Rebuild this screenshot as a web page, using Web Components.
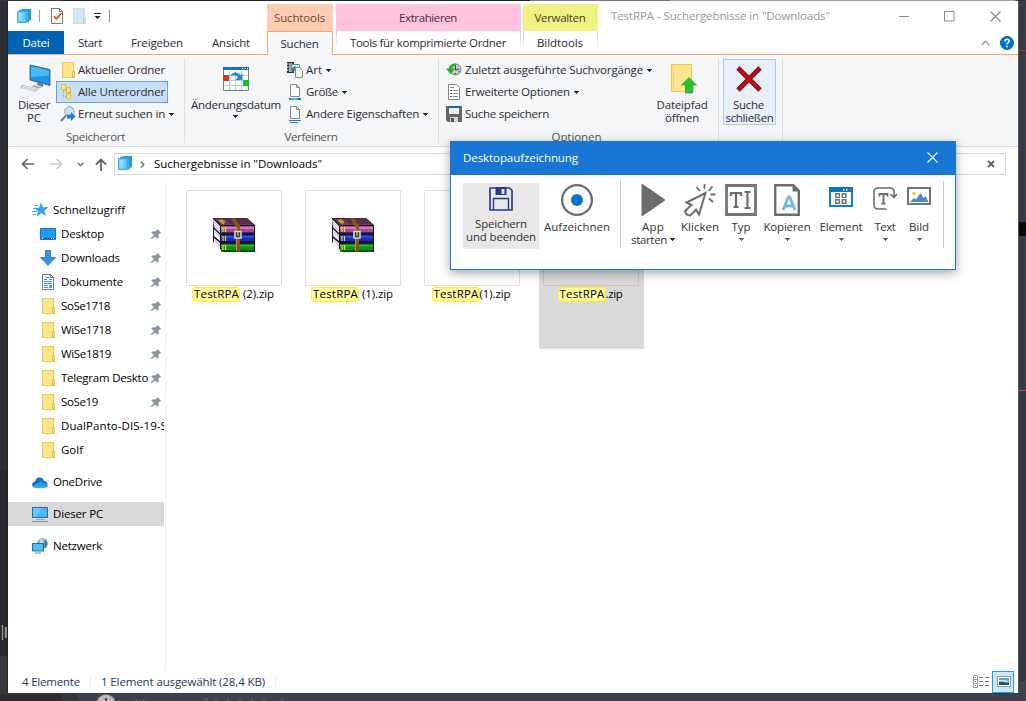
<!DOCTYPE html>
<html lang="de">
<head>
<meta charset="utf-8">
<title>Explorer</title>
<style>
html,body{margin:0;padding:0;width:1026px;height:701px;overflow:hidden}
body{font:11.5px/16px "Open Sans","Noto Sans",sans-serif;color:#000;background:#2d2f36}
</style>
</head>
<body>
<app-desktop></app-desktop>
<script>
const folder = `<path d="M1.5.5h11v15h-11z" fill="#ffe48e" stroke="#eec84f"/><path d="M11.500 9.500h2v6h-2z" fill="#ffe081" stroke="#e6b93a"/>`;
const cubes = `<path d="M5 0h9v11l-2 1H5z" fill="#2b9bdc"/><path d="M2.500 1h9v12h-9z" fill="#42b3ee" stroke="#1e8fd0" stroke-width=".7"/><path d="M.5 2.500h8.500v11H.5z" fill="#66caf8" stroke="#2d9ddb" stroke-width=".8"/><path d="M1.500 3.500h4v8h-4z" fill="#8ddcff"/>`;
const page = `<path d="M2.500.5h6l3 3v9h-9z" fill="#fafafa" stroke="#888"/><path d="M8.500.5v3h3" fill="none" stroke="#888"/>`;
// name: [width, height, markup]
const ICONS = {
 cubes: [14,14,cubes],
 folder: [15,16,folder],
 task: [12,16,`<path d="M.5.5h8l3 3v12H.5z" fill="#fdfdfd" stroke="#777"/><path d="M8.500.5v3h3" fill="none" stroke="#777"/><path d="M3 8.500l2.500 2.500 5-6" fill="none" stroke="#e8521c" stroke-width="1.800"/>`],
 pale: [13,16,`<path d="M.5.5h11v15H.5z" fill="#d8e4f6" stroke="#ccd9ee"/><path d="M10.500 9.500h2v6h-2z" fill="#d0ddf2" stroke="#bccbe4"/>`],
 caret: [5,3,`<path d="M0 0h5v1H4v1H3v1H2V2H1V1H0z" fill="currentColor"/>`],
 qcaret: [7,6,`<path d="M0 0h7v1H0zM.5 3h6l-3 3z" fill="#222"/>`],
 min: [11,11,`<path d="M0 5.500h10" stroke="#888"/>`],
 max: [11,11,`<path d="M.5.5h9.500v9.500H.5z" fill="none" stroke="#888"/>`],
 close: [11,11,`<path d="M.5.5l10 10M10.500.5l-10 10" stroke="currentColor" stroke-width="1.100"/>`],
 up6: [9,6,`<path d="M.7 5L4.500 1.200 8.300 5" fill="none" stroke="#999" stroke-width="1.400"/>`],
 help: [14,14,`<circle cx="7" cy="7" r="6.500" fill="#0078d7" stroke="#005a9e"/><path d="M4.900 5.500c0-3 4.400-2.700 4.200-.2C9 6.800 7 6.700 7 8.500M7 9.800v1.500" fill="none" stroke="#fff" stroke-width="1.500"/>`],
 pc: [32,28,`<path d="M10 0l20 4.500v16L10 15z" fill="#1795e8" stroke="#3d4a55" stroke-width=".8"/><path d="M11 1l18 4.500v5L11 12z" fill="#47b9fa"/><path d="M18 17.500l5 1.500v3l-6-2z" fill="#777"/><path d="M14 20l8 2.500-4 1-6-2z" fill="#aaa"/><path d="M2 19.500l17 4.500-4 3-15-4z" fill="#bfc4c8"/><path d="M3 21l13 3.500M1.500 22.500l13 3.500M7 20l-4 3M11 21.500l-4 3M15 22.500l-4 3" stroke="#f0f0f0" stroke-width=".7"/>`],
 tree: [16,16,`<path d="M3 5v8h4M3 6h5" fill="none" stroke="#999" stroke-dasharray="1 1"/><path d="M1.500.5h4v5h-4zM6.500 3.500h4v5h-4z" fill="#ffe48e" stroke="#e6b93a"/><path d="M6.500 9.500h4v5.500h-4z" fill="#ffe48e" stroke="#e6b93a"/>`],
 again: [16,16,`<circle cx="9.500" cy="5.500" r="4.800" fill="#c4e5fa" stroke="#8aa0b0"/><path d="M6 9.500L1 15" stroke="#6f7b85" stroke-width="2"/><path d="M7 8.500h4V6l4.500 4.500L11 15v-2.500H7z" fill="#1c7fd6"/>`],
 calendar: [26,24,`<path d="M.5.5h25v23H.5z" fill="#fff" stroke="#777"/><path d="M0 0h26v3H0z" fill="#1871c5"/><path d="M19 1h1v1h-1zM21.500 1h1v1h-1zM24 1h1v1h-1z" fill="#fff"/><path d="M1 8.500h24M1 13.500h24M1 18.500h24M6.500 4v19M12.500 4v19M18.500 4v19" stroke="#a8cfe6"/><path d="M0 8h6v6H0z" fill="#e03127"/><path d="M20 13h6v6h-6z" fill="#1dbb33"/><path d="M7 9.500c2-5 8-5 10.500-1.500l2-2v7h-7l2.500-2.500c-2-2.500-5-3-8-1z" fill="#2688da"/>`],
 art: [16,16,`<path d="M0 0h7v11H0z" fill="#333"/><path d="M2 1h3v9H2z" fill="#9ab"/><path d="M0 2h1.500M0 5h1.500M0 8h1.500" stroke="#fff"/><path d="M4.500 2.500h8v6h-8z" fill="#d7ecfb" stroke="#777"/><path d="M5 6l3-2 4 4H5z" fill="#278f87"/><path d="M8.500 5.500h4l3 3v7h-7z" fill="#fafafa" stroke="#888"/>`],
 size: [14,16,page+`<path d="M1 14h12v2H1z" fill="#1383cf"/><path d="M3 14.500h6v1H3z" fill="#8fe0ff"/>`],
 props: [14,17,page+`<path d="M1 14.500h12M2 16.500h8" stroke="#1779ca"/>`],
 recent: [16,14,`<circle cx="9.500" cy="6.500" r="5.500" fill="#c6cacc" stroke="#777"/><path d="M9.500 2v5l3.500-1M5.500 7h1M9.500 11v-1M12.500 8.500h1" fill="none" stroke="#444"/><path d="M9.500.6C5 .6 3.200 3 3 5.500H0L4.500 11 9 5.500H6C6.300 4 7.500 2.800 10 2.400z" fill="#1eb52e"/>`],
 options: [16,16,`<path d="M2.500.5h8l3 3v12h-11z" fill="#fff" stroke="#888"/><path d="M4 6h2v1H4zM4 9h2v1H4zM4 12h2v1H4z" fill="#555"/><path d="M7 6.500h5M7 9.500h5M7 12.500h5M4 3.500h4" stroke="#888"/>`],
 floppy: [16,16,`<path d="M0 0h16v16H2l-2-2z" fill="#666"/><path d="M3 0h10v2H3z" fill="#0f67b8"/><path d="M3 2h10v6H3z" fill="#efefef"/><path d="M4 11h8v5H4z" fill="#d6d6d6"/><path d="M5 12h3v4H5z" fill="#555"/>`],
 openpath: [27,30,`<path d="M.5.5h20v27H.5z" fill="#ffe38f" stroke="#efc74b"/><path d="M2.500 2v24" stroke="#f9d368"/><path d="M20.500 20h2v7.500h-2z" fill="#ffe38f" stroke="#efc74b"/><path d="M18 13.500l7.500 7.500h-4v8h-7v-8h-4z" fill="#23c335" stroke="#18a52a" stroke-width=".7"/>`],
 bigx: [26,26,`<path d="M2 2l22 22M24 2L2 24" stroke="#5d0a12" stroke-width="4.600"/><path d="M2.300 2.300l21.400 21.400M23.700 2.300L2.300 23.700" stroke="#c90913" stroke-width="2.900"/>`],
 back: [13,12,`<path d="M13 6H1.500M6.500 1l-5 5 5 5" fill="none" stroke="currentColor" stroke-width="1.700"/>`],
 upa: [12,13,`<path d="M6 13V1.500M1 6.500l5-5 5 5" fill="none" stroke="#666" stroke-width="1.800"/>`],
 chevd: [7,5,`<path d="M.7.7l2.800 3 2.800-3" fill="none" stroke="#777" stroke-width="1.600"/>`],
 chevr: [5,7,`<path d="M.8.5l3 3-3 3" fill="none" stroke="#777" stroke-width="1.500"/>`],
 boldx: [8,8,`<path d="M1 1l6 6M7 1L1 7" stroke="#666" stroke-width="2"/>`],
 star: [16,14,`<path d="M9 .5l1.800 4.200 4.700-.2-3.500 3 1.500 4.700-4.200-2.400-4 3 1.200-4.600L3 5.300l4.600-.3z" fill="#2ba3ee" stroke="#1684d0" stroke-width=".6"/><path d="M3 2.500h3M1 5.500h4M0 8.500h5M1 11.500h3" stroke="#3aa8ec" stroke-width="1"/>`],
 desktop: [16,12,`<path d="M.5.5h15v11H.5z" fill="#1d9bf3" stroke="#1478be"/><path d="M1 10.500h14" stroke="#0b65ab"/><path d="M2 10.500h1M11 10.500h1M13 10.500h1" stroke="#fff"/>`],
 down: [16,16,`<path d="M5.500.5h5v7h5L8 15.500.5 7.500h5z" fill="#3793e0" stroke="#2574c0" stroke-width=".8"/>`],
 doc: [16,16,`<path d="M2.500.5h8l3 3v12h-11z" fill="#fff" stroke="#777"/><path d="M10.500.5v3h3" fill="none" stroke="#777"/><path d="M6 3.500h3M4 5.500h3M9 5.500h3M4 7.500h8M4 9.500h8M4 11.500h4M4 13.500h4" stroke="#3a92d0"/><path d="M9 11h3v3H9z" fill="#6aa07b"/>`],
 pin: [10,10,`<path d="M6.300 0L10 3.700l-1.200.6-1.500 1.500.2 2.700-1.200 1L4 7.200.7 10 0 9.300 2.900 6 .5 3.700l1-1.200 2.800.2 1.500-1.500z" fill="#8a969f" stroke="#8a969f" stroke-width=".4"/>`],
 cloud: [16,11,`<path d="M3.500 10.500C-1 10.500-.6 5 3 4.500 4-.5 10.500-.8 12 4c4 .3 5 6 1 6.500z" fill="#0f6cc4"/><path d="M3 10.500c-1.500 0-2-1.500-1-2.500L9 4.500l5.500 2.500c2 1.500 1 3.500-1 3.500z" fill="#28a0ea"/>`],
 thispc: [16,15,`<path d="M.5.5h15v10H.5z" fill="#45b8fb" stroke="#38698a"/><path d="M1 1h9L4 10H1z" fill="#7bd0ff" opacity=".6"/><path d="M4 12h8v1H4z" fill="#9aa"/><path d="M0 14h16v1H0z" fill="#78909c"/>`],
 net: [16,16,`<circle cx="10.500" cy="5.500" r="5.200" fill="#5f9db4"/><path d="M7 3c2-3 5-2 5 0s-3 2-3 4z" fill="#b7dceb"/><path d="M13 2c3 2 3 6 0 8z" fill="#36768e"/><path d="M.5 5.500h11v7.500H.5z" fill="#4dbdf9" stroke="#2d6f9a"/><path d="M3 15h6" stroke="#788" stroke-width="1"/>`],
 rar: [42,34,`
  <path d="M0 0h34l8 7v27H10L0 24z" fill="#23151f"/>
  <path d="M0 1l7 7v7L1 9zM1 11l6 6v6l-6-5zM1 20l6 5v8l-6-7z" fill="#eef0fb"/>
  <path d="M1 4l6 6M1 7l6 6M2 14l5 5M2 22l5 6" stroke="#9a9ec4" stroke-width=".7"/>
  <path d="M1 .5h33l7 6.500H8z" fill="#713659"/><path d="M12 .5h22l6 5.500H17z" fill="#553046"/>
  <path d="M8 8h33v6H8z" fill="#a04c92"/><path d="M8 9h33v2H8z" fill="#cf7ac1"/><path d="M8 14h33v1H8z" fill="#54254d"/>
  <path d="M8 17h33v6H8z" fill="#1230c0"/><path d="M8 18h33v1.500H8z" fill="#2b50f5"/><path d="M8 23h33v1H8z" fill="#07135f"/>
  <path d="M8 26h33v6H8z" fill="#0f8f17"/><path d="M8 27h33v1.500H8z" fill="#20bd2a"/><path d="M8 32h33v1.500H8z" fill="#075e0c"/>
  <path d="M10 9v5M12.500 9v5M10 18v5M12.500 18v5M10 27v5M12.500 27v5" stroke="#e8db26" stroke-width="1.200"/>
  <path d="M6 2l5 4M8 1.500l4 3" stroke="#cbbb24" stroke-width="1.400"/>
  <path d="M18 .5h4l5 7v26h-4V9z" fill="#8b5220"/><path d="M23.500 9v24" stroke="#c68a43"/>
  <path d="M22 13.500h6v6.500h-6z" fill="#333" stroke="#d5d5d5" stroke-width="1.600"/><path d="M25 14v4" stroke="#eee"/>`],
 list: [16,13,`<path d="M.5.5h4v12h-4zM.5 4.500h4M.5 8.500h4" fill="#fff" stroke="#999"/><path d="M2 2h1v1H2z" fill="#555"/><path d="M2 6h1v1H2z" fill="#2277d0"/><path d="M2 10h1v1H2z" fill="#c22"/><path d="M6 2.500h4M12 2.500h4M6 6.500h4M12 6.500h4M6 10.500h4M12 10.500h4" stroke="#777"/>`],
 thumbs: [14,12,`<path d="M.5.500h13v10h-13z" fill="#fff" stroke="#999"/><path d="M2 2h10v7H2z" fill="#5d9fe0"/><path d="M2 4h7l3 2H2z" fill="#bfe0f5"/><path d="M2 6c4-1 7 1 10 1v2H2z" fill="#1d5a4c"/>`],
 save: [24,24,`<path d="M1 1h19.500L23 3.500V23H1z" fill="none" stroke="#2a3990" stroke-width="1.700" stroke-linejoin="round"/><path d="M6.500 0v8h11V0" fill="#2a3990"/><path d="M12.500 2h3v5h-3z" fill="#e6e6e6"/><path d="M4.500 23V11.500h15V23" fill="none" stroke="#2a3990" stroke-width="1.400"/>`],
 record: [32,32,`<circle cx="16" cy="16" r="14.900" fill="#fff" stroke="#6a6a6c" stroke-width="2.200"/><circle cx="16" cy="16" r="6" fill="#0a74c4"/>`],
 play: [24,32,`<path d="M1.500 1l21.500 15L1.500 31z" fill="#6c6d6f" stroke="#6c6d6f" stroke-width="2" stroke-linejoin="round"/>`],
 click: [32,32,`<path d="M21.500 9L2.500 18.500l5 2.500-6.500 6 1.500 3.500 3.500 1.200 6-6 3 4.800z" fill="none" stroke="#6c6d6f" stroke-width="2"/><path d="M20.500 0v5M12.500 3l3.500 4M28.500 2.500l-4 4.500M26.500 10.500h5M25 14.500l4 3.500" stroke="#6c6d6f" stroke-width="1.800"/>`],
 typ: [32,32,`<path d="M1.500 1.500h29v29h-29z" fill="#fff" stroke="#737477" stroke-width="2.800"/><path d="M6 12V9h10v3M11 9v14M8.500 23h5M19.500 8h6M19.500 24h6M22.500 8v16" fill="none" stroke="#6c6d6f" stroke-width="2.200"/>`],
 copy: [26,32,`<path d="M1.200 1.200h18l5.600 5.600v24H1.200z" fill="#fff" stroke="#6c6d6f" stroke-width="2.400"/><path d="M18.500 1v6.500h7z" fill="#6c6d6f"/><path d="M9 26l5.500-13h1.200L21 26M11 22h8" fill="none" stroke="#6db9e4" stroke-width="2.800"/>`],
 element: [24,20,`<path d="M1 1h22v18H1z" fill="#fff" stroke="#0e82c6" stroke-width="2"/><path d="M0 0h24v5H0z" fill="#0878bd"/><path d="M14 2h1.500v1.500H14zM17 2h1.500v1.500H17z" fill="#fff"/><path d="M20.500 2H22v1.500h-1.500z" fill="#e44"/><path d="M6.800 6.800h3.600v3.600H6.800zM13.300 6.800h3.600v3.600h-3.600zM6.800 12.700h3.600v3.600H6.800zM13.300 12.700h3.600v3.600h-3.600z" fill="none" stroke="#707173" stroke-width="1.400"/>`],
 text: [24,24,`<path d="M13.500 22H5c-2.500 0-4-1.500-4-4V5c0-2.500 1.500-4 4-4h12c2.500 0 4 1.500 4 4v4M17.500 7l3.500 3.500L24 7" fill="none" stroke="#6c6d6f" stroke-width="1.600"/><path d="M6.500 9.500V7h8v2.500M10.500 7v9.500M8.500 16.500h4" fill="none" stroke="#6c6d6f" stroke-width="1.800"/>`],
 image: [24,18,`<path d="M1 1h22v16H1z" fill="#fff" stroke="#737477" stroke-width="2"/><circle cx="7" cy="6.500" r="2" fill="#f5cf5c"/><path d="M3 15l4-4 2 1.500L13.500 6l3 5 2-2 3 6z" fill="#4f86c9"/>`]
};

// registers an element whose shadow root is cloned from a template
function define(tag, css, html, setup) {
  const t = document.createElement('template');
  t.innerHTML = '<style>' + css + '</style>' + html;
  customElements.define(tag, class extends HTMLElement {
    constructor() { super(); this.attachShadow({mode:'open'}).append(t.content.cloneNode(true)); }
    connectedCallback() { if (setup) setup(this, this.shadowRoot); }
  });
}
const carets = `<ui-icon name="caret"></ui-icon>`;

define('ui-icon', `:host{display:block;flex:none}svg{display:block;overflow:visible}`, `<svg></svg>`, (el, r) => {
  const [w,h,m] = ICONS[el.getAttribute('name')], s = r.querySelector('svg');
  s.setAttribute('width', w); s.setAttribute('height', h); s.setAttribute('viewBox', `0 0 ${w} ${h}`);
  s.innerHTML = m;
});
// a one-line label that tracks its letters to a given width
define('ui-label', `:host{display:block;flex:none;white-space:nowrap;line-height:16px}span{display:inline-block}`, `<span><slot></slot></span>`, (el, r) => {
  const w = +el.getAttribute('w');
  if (!w) return;
  const s = r.querySelector('span'), n = el.textContent.length;
  s.style.letterSpacing = ((w - s.getBoundingClientRect().width) / n).toFixed(3) + 'px';
  el.style.width = w + 'px';
});

define('app-desktop', `
:host{display:grid;grid-template:1px 692px 8px/8px 1010px 8px;width:1026px;height:701px;position:relative;background:#2b2c32}
.top{grid-column:1/-1;background:linear-gradient(90deg,#35353c 62px,#222127 62px 530px,#77777b 530px 670px,#9b9aa0 670px 830px,#9b9aa0 830px 1014px,#33353c 1018px)}
.l{background:linear-gradient(#2d2f36 0 469px,#292a30 469px 655px,#34373d 655px 660px,#34373d);display:flex;flex-direction:column;justify-content:flex-end;border-right:1px solid #242529;box-sizing:border-box}
.l svg{margin-bottom:52px}
.r{background:linear-gradient(#383b43 49px,#a33038 49px 50px,#383b43 50px 221px,#08080a 221px 235px,#383b43 235px 389px,#d8433f 389px 390px,#33363e 390px 680px,#40434d 680px);border-left:1px solid #55565b;box-sizing:border-box}
.b{grid-column:1/-1;background:linear-gradient(#3a3b40 1px,transparent 1px),linear-gradient(90deg,#2b2c31 62px,#34363d 62px 78px,#3e414b 78px)}
.b svg{display:block}
`, `<div class="top"></div><div class="l"><svg width="7" height="16"><path d="M2.500 0v15M5.500 2v11M7 2v11" stroke="#999" stroke-width="1.300"/></svg></div>
<explorer-window></explorer-window><div class="r"></div>
<div class="b"><svg width="1026" height="8"><circle cx="106" cy="11" r="9.500" fill="#b9babd"/><path d="M105 5h2v3h-2z" fill="#44464e"/><path d="M136 6v2M140 7v1M144 6v2M204 6h4M216 5v3M228 5v3M240 5v3M252 5v3M264 5v3M282 5v3" stroke="#747780" fill="none"/></svg></div>
<recorder-dialog></recorder-dialog>`);

define('explorer-window', `:host{display:flex;flex-direction:column;background:#fff;overflow:hidden}
.body{display:flex;flex:1;min-height:0}`,
`<window-head></window-head><ribbon-bar></ribbon-bar><address-bar></address-bar><div class="body"><nav-pane></nav-pane><file-grid></file-grid></div><status-bar></status-bar>`);

define('window-head', `
:host{display:flex;height:53px;border-bottom:1px solid #ffa475;flex:none}
.left{width:259px}.quick{height:30px;display:flex;align-items:center;padding-left:9px;box-sizing:border-box}
.sep{width:1px;height:12px;background:#999}
.tabs{display:flex;height:24px;align-items:center;color:#2a2a35;margin-bottom:-1px}
.file{background:#0063b1;color:#fff;width:56px;height:23px;display:flex;align-items:center;justify-content:center;margin:0 14px 1px 0;padding-top:1px;box-sizing:border-box}
.right{flex:1;display:flex;flex-direction:column}
.title{height:30px;display:flex;align-items:center;color:#999;padding:0 18px 0 13px}
.title ui-label{margin-right:auto}.tools{display:flex;height:23px;align-items:center;justify-content:flex-end;gap:10px;padding-right:4px}`,
`<div class="left"><div class="quick"><ui-icon name="cubes"></ui-icon><i class="sep" style="margin:0 11px 0 8px"></i><ui-icon name="task"></ui-icon><ui-icon name="pale" style="margin:0 8px 0 10px"></ui-icon><ui-icon name="qcaret"></ui-icon><i class="sep" style="margin-left:8px"></i></div>
<div class="tabs"><span class="file"><ui-label w="27">Datei</ui-label></span><ui-label w="24">Start</ui-label><ui-label w="52" style="margin:0 29px">Freigeben</ui-label><ui-label w="38">Ansicht</ui-label></div></div>
<context-tab active style="--c:#ffcdb4;--t:#6f4630;width:66px;margin-right:3px"><ui-label slot="head" w="51">Suchtools</ui-label><ui-label w="38">Suchen</ui-label></context-tab>
<context-tab style="--c:#ffc3de;--t:#4c2b3a;width:185px;margin-right:2px"><ui-label slot="head" w="58">Extrahieren</ui-label><ui-label w="156">Tools für komprimierte Ordner</ui-label></context-tab>
<context-tab style="--c:#f0f083;--t:#44441f;width:75px"><ui-label slot="head" w="51">Verwalten</ui-label><ui-label w="46">Bildtools</ui-label></context-tab>
<div class="right"><div class="title"><ui-label w="219">TestRPA - Suchergebnisse in "Downloads"</ui-label><ui-icon name="min" style="margin-right:34px"></ui-icon><ui-icon name="max" style="margin-right:35px"></ui-icon><ui-icon name="close" style="color:#888;margin-right:-1px"></ui-icon></div>
<div class="tools"><ui-icon name="up6"></ui-icon><ui-icon name="help"></ui-icon></div></div>`);

define('context-tab', `:host{display:flex;flex-direction:column;flex:none}
.h{height:27px;margin-top:3px;background:var(--c);color:var(--t);display:flex;align-items:center;justify-content:center;padding:1px 1px 0 0;box-sizing:border-box}
.t{height:23px;box-sizing:border-box;display:flex;align-items:center;justify-content:center;padding:1px 1px 0 0;color:#2a2a35;background:linear-gradient(#ccc,#fff) 0 0/1px 18px no-repeat,linear-gradient(#ccc,#fff) 100% 0/1px 18px no-repeat}
:host([active]) .t{height:24px;margin-bottom:-1px;background:#f5f6f7;border:1px solid #ffa475;border-bottom:0;padding-top:0}`,
`<div class="h"><slot name="head"></slot></div><div class="t"><slot></slot></div>`);

define('ribbon-bar', `:host{display:flex;height:91px;background:#f5f6f7;border-bottom:1px solid #dadbdc;color:#2b2b36;flex:none}
.col{display:flex;flex-direction:column}`,
`<ribbon-group style="width:177px"><ribbon-big style="width:40px;margin-left:6px"><ui-icon slot="i" name="pc" style="margin-left:3px"></ui-icon><ui-label w="32">Dieser</ui-label><ui-label w="14">PC</ui-label></ribbon-big>
<div class="col" style="margin-left:2px"><ribbon-row><ui-icon slot="i" name="folder"></ui-icon><ui-label w="87">Aktueller Ordner</ui-label></ribbon-row><ribbon-row on><ui-icon slot="i" name="tree"></ui-icon><ui-label w="87">Alle Unterordner</ui-label></ribbon-row><ribbon-row><ui-icon slot="i" name="again"></ui-icon><ui-label w="87">Erneut suchen in</ui-label>${carets}</ribbon-row></div><ui-label slot="name" w="59">Speicherort</ui-label></ribbon-group>
<ribbon-group style="width:254px"><ribbon-big style="width:90px;margin-left:6px"><ui-icon slot="i" name="calendar"></ui-icon><ui-label w="90">Änderungsdatum</ui-label><ui-icon name="caret" style="margin:4px 1px 0 0"></ui-icon></ribbon-big>
<div class="col" style="margin-left:2px;--g:1px"><ribbon-row><ui-icon slot="i" name="art"></ui-icon><ui-label w="16">Art</ui-label>${carets}</ribbon-row><ribbon-row><ui-icon slot="i" name="size"></ui-icon><ui-label w="32">Größe</ui-label>${carets}</ribbon-row><ribbon-row><ui-icon slot="i" name="props"></ui-icon><ui-label w="113">Andere Eigenschaften</ui-label>${carets}</ribbon-row></div><ui-label slot="name" w="53">Verfeinern</ui-label></ribbon-group>
<ribbon-group style="width:280px"><div class="col" style="margin-left:3px;--g:1px"><ribbon-row><ui-icon slot="i" name="recent"></ui-icon><ui-label w="178">Zuletzt ausgeführte Suchvorgänge</ui-label>${carets}</ribbon-row><ribbon-row><ui-icon slot="i" name="options"></ui-icon><ui-label w="105">Erweiterte Optionen</ui-label>${carets}</ribbon-row><ribbon-row><ui-icon slot="i" name="floppy"></ui-icon><ui-label w="84">Suche speichern</ui-label></ribbon-row></div>
<ribbon-big style="width:52px;margin-left:1px"><ui-icon slot="i" name="openpath" style="margin-left:4px"></ui-icon><ui-label w="51">Dateipfad</ui-label><ui-label w="34">öffnen</ui-label></ribbon-big><ui-label slot="name" w="50" style="margin-right:3px">Optionen</ui-label></ribbon-group>
<ribbon-group style="width:64px"><ribbon-big hot style="width:53px;margin-left:4px"><ui-icon slot="i" name="bigx" style="margin-right:2px"></ui-icon><ui-label w="31" style="margin-right:2px">Suche</ui-label><ui-label w="48">schließen</ui-label></ribbon-big></ribbon-group>`);

define('ribbon-group', `:host{display:flex;flex-direction:column;box-sizing:border-box;background:linear-gradient(#dfe0e2,#dfe0e2) 100% 3px/1px 85px no-repeat;flex:none}
.c{display:flex;height:66px;margin-top:4px}.n{display:flex;justify-content:center;color:#555;margin:4px 2px 0 0}`,
`<div class="c"><slot></slot></div><div class="n"><slot name="name"></slot></div>`);

define('ribbon-big', `:host{display:flex;flex-direction:column;align-items:center;box-sizing:border-box;height:66px;border:1px solid transparent;flex:none}
:host([hot]){background:#e8eff7;border-color:#a5cdf7}
.i{height:38px;display:flex;align-items:center;justify-content:center}
.t{display:flex;flex-direction:column;align-items:center;white-space:nowrap}::slotted(ui-label){line-height:13px!important;height:13px}`,
`<div class="i"><slot name="i"></slot></div><div class="t"><slot></slot></div>`);

define('ribbon-row', `:host{display:flex;align-items:center;height:22px;box-sizing:border-box;border:1px solid transparent;padding:0 2px 0 3px;align-self:flex-start;gap:4px}
:host([on]){background:#c9dff5;border-color:#62a2e4}.i{width:16px;display:flex;justify-content:center;margin-right:calc(var(--g,0px) - 2px)}`,
`<span class="i"><slot name="i"></slot></span><slot></slot>`);

define('address-bar', `:host{display:flex;align-items:center;height:34px;flex:none;padding:0 12px 0 13px}
.box{flex:1;height:22px;border:1px solid #d9d9d9;box-sizing:border-box;display:flex;align-items:center;padding:0 10px 0 3px;margin-left:7px}`,
`<ui-icon name="back" style="color:#666"></ui-icon><ui-icon name="back" style="color:#d0d0d0;margin:0 14px 0 16px;transform:scaleX(-1)"></ui-icon><ui-icon name="chevd" style="margin-right:11px"></ui-icon><ui-icon name="upa"></ui-icon>
<div class="box"><ui-icon name="cubes" style="margin-bottom:2px"></ui-icon><ui-icon name="chevr" style="margin:0 9px 0 8px"></ui-icon><ui-label w="168" style="margin-right:auto">Suchergebnisse in "Downloads"</ui-label><ui-icon name="boldx"></ui-icon></div>`);

const pins = ['SoSe1718','WiSe1718','WiSe1819','Telegram Desktop','SoSe19'], pw = [49,50,50,94,37];
define('nav-pane', `:host{display:block;width:158px;box-sizing:border-box;padding-top:17px;border-right:1px solid #f1f1f1;margin-top:0;flex:none}`,
`<nav-item top><ui-icon slot="i" name="star"></ui-icon><ui-label w="72">Schnellzugriff</ui-label></nav-item>
<nav-item pin><ui-icon slot="i" name="desktop"></ui-icon><ui-label w="43">Desktop</ui-label></nav-item>
<nav-item pin><ui-icon slot="i" name="down"></ui-icon><ui-label w="59">Downloads</ui-label></nav-item>
<nav-item pin><ui-icon slot="i" name="doc"></ui-icon><ui-label w="62">Dokumente</ui-label></nav-item>
${pins.map((p,i)=>`<nav-item pin><ui-icon slot="i" name="folder"></ui-icon><ui-label w="${pw[i]}">${p}</ui-label></nav-item>`).join('')}
<nav-item><ui-icon slot="i" name="folder"></ui-icon><ui-label w="106">DualPanto-DIS-19-S</ui-label></nav-item>
<nav-item><ui-icon slot="i" name="folder"></ui-icon><ui-label w="22">Golf</ui-label></nav-item>
<nav-item top gap><ui-icon slot="i" name="cloud"></ui-icon><ui-label w="49">OneDrive</ui-label></nav-item>
<nav-item top gap on><ui-icon slot="i" name="thispc"></ui-icon><ui-label w="50">Dieser PC</ui-label></nav-item>
<nav-item top gap><ui-icon slot="i" name="net"></ui-icon><ui-label w="49">Netzwerk</ui-label></nav-item>`);
define('nav-item', `:host{display:flex;align-items:center;height:24px;width:156px;box-sizing:border-box;padding-left:32px}
:host([top]){padding-left:24px}:host([gap]){margin-top:8px}:host([on]){background:#d9d9d9}
.i{width:16px;display:flex;justify-content:center;margin-right:5px;flex:none}.t{flex:1;min-width:0;overflow:hidden}.p{display:none;width:10px;margin:0 3px}:host([pin]) .p{display:block}`,
`<span class="i"><slot name="i"></slot></span><span class="t"><slot></slot></span><span class="p"><ui-icon name="pin"></ui-icon></span>`);

define('file-grid', `:host{display:flex;gap:14px;padding:5px 0 0 16px;align-items:flex-start}`,
`<file-tile><ui-label slot="hit" w="45">TestRPA</ui-label><ui-label w="34">&nbsp;(2).zip</ui-label></file-tile>
<file-tile><ui-label slot="hit" w="45">TestRPA</ui-label><ui-label w="34">&nbsp;(1).zip</ui-label></file-tile>
<file-tile><ui-label slot="hit" w="45">TestRPA</ui-label><ui-label w="31">(1).zip</ui-label></file-tile>
<file-tile on><ui-label slot="hit" w="45">TestRPA</ui-label><ui-label w="17">.zip</ui-label></file-tile>`);
define('file-tile', `:host{display:block;width:105px;height:163px}:host([on]){background:#d9d9d9}
.b{width:96px;height:96px;box-sizing:border-box;border:1px solid #dedede;border-radius:1px;margin:4px 4px 0;background:#fff;display:flex;align-items:center;justify-content:center;padding-bottom:6px}
:host([on]) .b{background:#d9d9d9;border-color:#c5c5c5}
.n{display:flex;justify-content:center;align-items:center;height:16px;padding-right:3px}.h{background:#ffffa0;border:1px solid #ffee30;border-radius:3px;height:13px;display:flex;align-items:center;padding:0 0 0 1px}`,
`<div style="display:flex"><div class="b"><ui-icon name="rar"></ui-icon></div></div><div class="n"><span class="h"><slot name="hit"></slot></span><slot></slot></div>`);

define('status-bar', `:host{display:flex;align-items:center;height:23px;color:#1e395b;flex:none;padding-left:14px}
i{width:1px;height:12px;background:#eee}
.v{width:22px;height:22px;box-sizing:border-box;border:1px solid #26a0da;background:#cbe8f6;display:flex;align-items:center;justify-content:center;margin:0 4px 0 3px}`,
`<ui-label w="58">4 Elemente</ui-label><i style="margin:0 10px"></i><ui-label w="164">1 Element ausgewählt (28,4 KB)</ui-label><i style="margin:0 auto 0 10px"></i><ui-icon name="list"></ui-icon><span class="v"><ui-icon name="thumbs" style="margin-left:2px"></ui-icon></span>`);

define('recorder-dialog', `:host{position:absolute;left:450px;top:141px;width:506px;height:129px;box-sizing:border-box;border:1px solid #1976d4;background:#fff;box-shadow:0 3px 10px rgba(0,0,0,.35);display:flex;flex-direction:column}
.bar{height:33px;background:#1976d4;color:#fff;display:flex;align-items:center;justify-content:space-between;padding:0 17px 2px 12px;box-sizing:border-box}
.tools{display:flex;padding:8px 0 0 12px;color:#333}
i{width:1px;height:67px;background:#c8c8c8;margin-top:-2px}`,
`<div class="bar"><ui-label w="115">Desktopaufzeichnung</ui-label><ui-icon name="close"></ui-icon></div>
<div class="tools">
<rec-tool on style="width:76px"><ui-icon slot="i" name="save"></ui-icon><ui-label w="52">Speichern</ui-label><ui-label w="70">und beenden</ui-label></rec-tool>
<rec-tool style="width:76px;margin-right:5px"><ui-icon slot="i" name="record"></ui-icon><ui-label w="66">Aufzeichnen</ui-label></rec-tool><i></i>
<rec-tool style="width:46px;margin-left:9px"><ui-icon slot="i" name="play" style="margin-right:1px"></ui-icon><ui-label w="22">App</ui-label><span style="display:flex;align-items:center;gap:3px"><ui-label w="36">starten</ui-label>${carets}</span></rec-tool>
<rec-tool drop style="width:40px;margin-left:4px"><ui-icon slot="i" name="click"></ui-icon><ui-label w="38">Klicken</ui-label></rec-tool>
<rec-tool drop style="width:32px;margin-left:5px"><ui-icon slot="i" name="typ"></ui-icon><ui-label w="19">Typ</ui-label></rec-tool>
<rec-tool drop style="width:48px;margin-left:6px"><ui-icon slot="i" name="copy"></ui-icon><ui-label w="47">Kopieren</ui-label></rec-tool>
<rec-tool small drop style="width:44px;margin-left:8px"><ui-icon slot="i" name="element"></ui-icon><ui-label w="43">Element</ui-label></rec-tool>
<rec-tool small drop style="width:26px;margin-left:9px"><ui-icon slot="i" name="text"></ui-icon><ui-label w="21">Text</ui-label></rec-tool>
<rec-tool small drop style="width:26px;margin:0 11px 0 8px"><ui-icon slot="i" name="image"></ui-icon><ui-label w="20">Bild</ui-label></rec-tool><i></i></div>`);
define('rec-tool', `:host{display:flex;flex-direction:column;align-items:center;height:66px;flex:none}
:host([on]){background:#e8e8e8}.i{height:32px;margin-top:1px;display:flex;align-items:flex-start;justify-content:center}
:host([on]) .i{height:31px;padding-top:3px;box-sizing:border-box}:host([small]) .i{padding-top:3px;height:29px}
:host([on]) .t{padding-top:2px}.t{display:flex;flex-direction:column;align-items:center;padding-top:4px}
.d{display:none;color:#666;margin-top:5px}:host([drop]) .d{display:block}::slotted(ui-label){line-height:13px!important}::slotted(span){line-height:13px;height:13px}`,
`<div class="i"><slot name="i"></slot></div><div class="t"><slot></slot></div><div class="d"><ui-icon name="caret"></ui-icon></div>`);
</script>
</body>
</html>
